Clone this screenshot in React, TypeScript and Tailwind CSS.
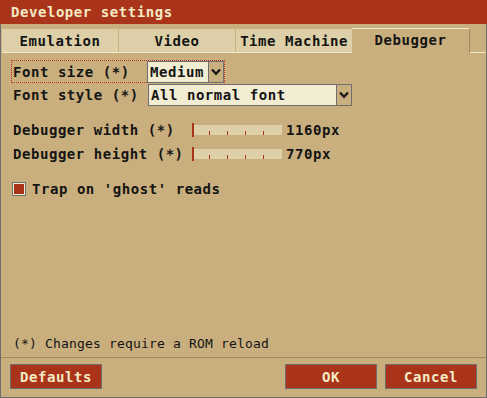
import React from 'react';

const Chevron: React.FC = () => (
  <svg width="10" height="8" viewBox="0 0 10 8">
    <path d="M1 1.5 L5 5.8 L9 1.5" stroke="#1a1a1a" strokeWidth="2.4" fill="none" />
  </svg>
);

const Select: React.FC<{ value: string; width: string }> = ({ value, width }) => (
  <div className={`${width} h-[22px] flex border border-[#6e6e6e] bg-[#f1ecd2]`}>
    <div className="flex-1 pl-[2px] flex items-center">{value}</div>
    <div className="w-[15px] border-l border-[#6e6e6e] bg-[#c9af7e] flex items-center justify-center">
      <Chevron />
    </div>
  </div>
);

const Slider: React.FC = () => (
  <div className="relative w-[90px] h-[14px] flex items-center">
    <div className="w-full h-[10px] bg-[#ddd0a8] flex items-end pl-[17px] gap-[17px]">
      <div className="w-px h-[4px] bg-[#a9341a]" />
      <div className="w-px h-[4px] bg-[#a9341a]" />
      <div className="w-px h-[4px] bg-[#a9341a]" />
      <div className="w-px h-[4px] bg-[#a9341a]" />
    </div>
    <div className="absolute left-0 top-0 w-[2px] h-[14px] bg-[#a9341a]" />
  </div>
);

const tabs = ['Emulation', 'Video', 'Time Machine'];

export default function App() {
  return (
    <div className="w-[487px] h-[398px] flex flex-col bg-[#c9af7e] text-[#141414] font-['DejaVu_Sans_Mono',monospace] text-[14px] font-bold tracking-[0.55px] leading-none">
      <div className="h-[24px] shrink-0 bg-[#a9341a] text-[#f4ebc4] pl-[11px] flex items-center">
        Developer settings
      </div>
      <div className="flex-1 flex flex-col border-x border-b border-[#6e6e6e]">
        <div className="mt-[4px] h-[25px] flex items-end pl-px">
          <div className="flex gap-px border-b border-[#f1e9c8] h-[24px]">
            {tabs.map((t) => (
              <div key={t} className="w-[116px] bg-[#ddd0a8] flex items-center justify-center">
                {t}
              </div>
            ))}
          </div>
          <div className="w-[118px] h-[25px] border-t border-[#f1e9c8] border-r border-r-[#a08a60] flex items-center justify-center pb-[2px]">
            Debugger
          </div>
          <div className="flex-1 border-b border-[#f1e9c8]" />
        </div>

        <div className="mt-[7px] ml-[10px] w-[214px] h-[23px] flex border border-dotted border-[#c0302a]">
          <div className="w-[135px] pl-px flex items-center">Font size (*)</div>
          <Select value="Medium" width="w-[77px]" />
        </div>
        <div className="mt-px ml-[12px] flex h-[22px]">
          <div className="w-[135px] flex items-center">Font style (*)</div>
          <Select value="All normal font" width="w-[204px]" />
        </div>

        <div className="mt-[12px] ml-[12px] flex items-center h-[24px]">
          <div className="w-[179px]">Debugger width (*)</div>
          <Slider />
          <div className="ml-[4px]">1160px</div>
        </div>
        <div className="ml-[12px] flex items-center h-[24px]">
          <div className="w-[179px]">Debugger height (*)</div>
          <Slider />
          <div className="ml-[4px]">770px</div>
        </div>

        <div className="mt-[12px] ml-[11px] flex items-center h-[22px]">
          <div className="w-[14px] h-[14px] border border-[#6e6e6e] bg-[#f1ecd2] p-px">
            <div className="w-full h-full bg-[#a9341a]" />
          </div>
          <div className="ml-[6px]">Trap on 'ghost' reads</div>
        </div>

        <div className="flex-1" />

        <div className="ml-[12px] h-[16px] flex items-center text-[13px] font-normal tracking-[0.17px]">
          (*) Changes require a ROM reload
        </div>
        <div className="mt-[6px] h-px bg-[#a08a60]" />
        <div className="mt-[6px] mb-[8px] px-[9px] flex h-[25px] text-[#f4ebc4]">
          <div className="w-[92px] border border-[#6e6e6e] bg-[#a9341a] flex items-center justify-center">
            Defaults
          </div>
          <div className="flex-1" />
          <div className="w-[92px] border border-[#6e6e6e] bg-[#a9341a] flex items-center justify-center">
            OK
          </div>
          <div className="ml-[8px] w-[92px] border border-[#6e6e6e] bg-[#a9341a] flex items-center justify-center">
            Cancel
          </div>
        </div>
      </div>
    </div>
  );
}
